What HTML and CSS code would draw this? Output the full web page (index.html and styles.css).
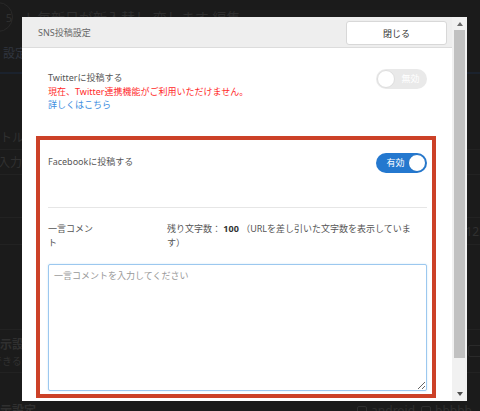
FILE: index.html
```html
<!DOCTYPE html>
<html lang="ja">
<head>
<meta charset="utf-8">
<title>SNS投稿設定</title>
<link rel="stylesheet" href="styles.css">
</head>
<body>
<div class="page">
  <header class="page-top">
    <span class="avatar">5</span>
    <h1 class="page-title">ト毎新日が新入替し 変します 編集</h1>
  </header>
  <nav class="page-tabs"><span class="tab">設定</span></nav>
  <div class="prow row-a"><span class="pl">タイトル</span></div>
  <div class="prow row-b"><span class="pl">再入力</span></div>
  <div class="prow row-c"></div>
  <div class="prow row-d"><span class="pl"></span><span class="pr">123</span></div>
  <div class="prow row-e"></div>
  <div class="prow row-f">
    <div class="pl-stack"><span class="pl strong">表示設定</span><span class="pl small">選択できる</span></div>
    <span class="pr box"></span>
  </div>
  <div class="prow row-g">
    <span class="pl strong">表示設定</span>
    <span class="checks"><span class="chk"><i></i>android</span><span class="chk"><i></i>bbbbb</span></span>
  </div>
</div>

<div class="modal" role="dialog" aria-label="SNS投稿設定">
  <div class="modal-scroll">
    <div class="modal-head">
      <span class="modal-title">SNS投稿設定</span>
      <button class="btn-close" type="button">閉じる</button>
    </div>
    <div class="modal-body">
      <section class="sns twitter">
        <div class="sns-row">
          <span class="sns-label">Twitterに投稿する</span>
          <span class="toggle off"><span class="knob"></span><span class="toggle-text">無効</span></span>
        </div>
        <p class="warn">現在、Twitter連携機能がご利用いただけません。</p>
        <a class="more" href="#">詳しくはこちら</a>
      </section>
      <section class="sns facebook">
        <div class="sns-row">
          <span class="sns-label">Facebookに投稿する</span>
          <span class="toggle on"><span class="toggle-text">有効</span><span class="knob"></span></span>
        </div>
        <hr class="divider">
        <div class="comment-row">
          <span class="comment-label">一言コメント</span>
          <span class="comment-note">残り文字数： <b>100</b> （URLを差し引いた文字数を表示しています）</span>
        </div>
        <textarea class="comment-input" placeholder="一言コメントを入力してください"></textarea>
      </section>
    </div>
  </div>
  <div class="scrollbar" aria-hidden="true">
    <span class="sb-btn up"><i></i></span>
    <span class="sb-track"><span class="sb-thumb"></span></span>
    <span class="sb-btn down"><i></i></span>
  </div>
</div>
</body>
</html>
```

FILE: styles.css
```css
html, body {
  margin: 0;
  padding: 0;
}
body {
  width: 480px;
  height: 411px;
  overflow: hidden;
  background: #1b1b1b;
  font-family: "Noto Sans", "Noto Sans CJK JP", sans-serif;
}

/* dimmed background page */
.page {
  color: #303030;
  font-size: 12px;
}
.page-top {
  height: 34px;
  display: flex;
  align-items: center;
  gap: 10px;
}
.avatar {
  width: 30px;
  height: 30px;
  margin-left: -17px;
  border: 1px solid #292929;
  border-radius: 50%;
  display: flex;
  align-items: center;
  justify-content: flex-end;
  box-sizing: border-box;
  font-size: 11px;
  color: #303030;
}
.page-title {
  margin: 0;
  font-size: 14px;
  font-weight: normal;
  color: #2e2e2e;
}
.page-tabs {
  height: 38px;
  border-bottom: 2px solid #1b222d;
  display: flex;
  align-items: center;
  padding-left: 3px;
}
.tab {
  color: #30353f;
}
.prow {
  display: flex;
  justify-content: space-between;
  border-bottom: 1px solid #222;
}
.pl {
  margin-left: -24px;
}
.row-a { height: 75px; align-items: flex-end; }
.row-a .pl { margin-bottom: 3px; }
.row-b { height: 24px; align-items: center; }
.row-b .pl { margin-left: -14px; }
.row-c { height: 42px; }
.row-d { height: 26px; align-items: center; }
.pr { margin-right: -6px; color: #303030; }
.row-e { height: 84px; }
.row-f { height: 42px; align-items: center; }
.pl-stack { display: flex; flex-direction: column; }
.pl.strong { font-weight: bold; margin-left: -12px; }
.pl.small { font-size: 10px; margin-left: -28px; }
.box {
  width: 14px;
  height: 10px;
  border: 1px solid #2a2a2a;
  border-radius: 2px;
  margin-right: -4px;
}
.row-g { height: 40px; align-items: flex-end; border-bottom: 0; }
.row-g .pl { margin-bottom: -6px; }
.checks { display: flex; gap: 6px; margin-bottom: -6px; margin-right: 8px; }
.chk { display: flex; align-items: center; gap: 4px; color: #2e2e2e; font-size: 12px; }
.chk i { width: 8px; height: 8px; border: 1px solid #2e2e2e; border-radius: 2px; }

/* modal */
.modal {
  position: fixed;
  left: 22px;
  top: 17px;
  width: 445px;
  height: 384px;
  background: #fff;
  display: flex;
  font-size: 9px;
  line-height: 13.5px;
  color: #555;
}
.modal-scroll {
  flex: 1;
  min-width: 0;
  overflow: hidden;
}
.scrollbar {
  width: 15px;
  background: #f1f1f1;
  display: flex;
  flex-direction: column;
}
.sb-btn {
  height: 13px;
  display: flex;
  align-items: center;
  justify-content: center;
}
.sb-btn.down { height: 14px; }
.sb-btn i {
  width: 0;
  height: 0;
  border-left: 3.5px solid transparent;
  border-right: 3.5px solid transparent;
}
.sb-btn.up i { border-bottom: 4px solid #6a6a6a; }
.sb-btn.down i { border-top: 4px solid #505050; }
.sb-track {
  flex: 1;
  padding: 0 2px;
}
.sb-thumb {
  display: block;
  height: 328px;
  background: #c1c1c1;
}

.modal-head {
  height: 31px;
  box-sizing: border-box;
  background: #eeeeee;
  border-bottom: 1px solid #dcdcdc;
  display: flex;
  justify-content: space-between;
  align-items: flex-start;
  padding: 4px 5px 0 16px;
}
.modal-title {
  line-height: 24px;
  color: #666;
}
.btn-close {
  width: 101px;
  height: 24px;
  background: #fff;
  border: 1px solid #d8d8d8;
  border-radius: 3px;
  font-family: inherit;
  font-size: 9px;
  color: #333;
  padding: 0;
}
.modal-body {
  padding: 21px 16px 37px 14px;
}
.sns-row {
  display: flex;
  justify-content: space-between;
  align-items: flex-start;
  height: 20px;
}
.sns-label {
  padding-top: 2px;
  color: #555;
}
.twitter {
  padding: 0 9px 0 12px;
}
.twitter .sns-row {
  margin-bottom: -4.5px;
}
.warn {
  margin: 0;
  color: #ff2a2a;
}
.more {
  color: #3d8ee0;
  text-decoration: none;
}
.facebook {
  margin-top: 24.5px;
  border: 4px solid #cc4127;
  padding: 13px 5px 3px 8px;
}
.toggle {
  width: 51px;
  height: 20px;
  border-radius: 10px;
  box-sizing: border-box;
  padding: 1px;
  display: flex;
  align-items: center;
  font-size: 9px;
  color: #fff;
}
.toggle.off {
  background: #e9e9e9;
}
.toggle.on {
  background: #2478cf;
}
.knob {
  width: 18px;
  height: 18px;
  border-radius: 50%;
  background: #fff;
  box-sizing: border-box;
}
.off .knob { border: 1px solid #dedede; }
.on .knob { border: 1px solid #1d6fc2; }
.toggle-text {
  flex: 1;
  text-align: center;
}
.on .toggle-text { padding-left: 6px; }
.divider {
  border: 0;
  border-top: 1px solid #e6e6e6;
  margin: 34px 0 14px;
}
.comment-row {
  display: grid;
  grid-template-columns: 50px 1fr;
  column-gap: 69px;
  padding-right: 7px;
}
.comment-note b {
  color: #333;
}
.comment-input {
  display: block;
  width: 100%;
  height: 127px;
  margin-top: 14.75px;
  box-sizing: border-box;
  border: 1px solid #9cc8ef;
  border-radius: 2px;
  box-shadow: 0 0 2px rgba(102, 175, 233, 0.35);
  padding: 4px 5px;
  font-family: inherit;
  font-size: 9px;
  line-height: 13.5px;
  color: #555;
  resize: vertical;
  outline: none;
}
.comment-input::placeholder {
  color: #999;
}
```
